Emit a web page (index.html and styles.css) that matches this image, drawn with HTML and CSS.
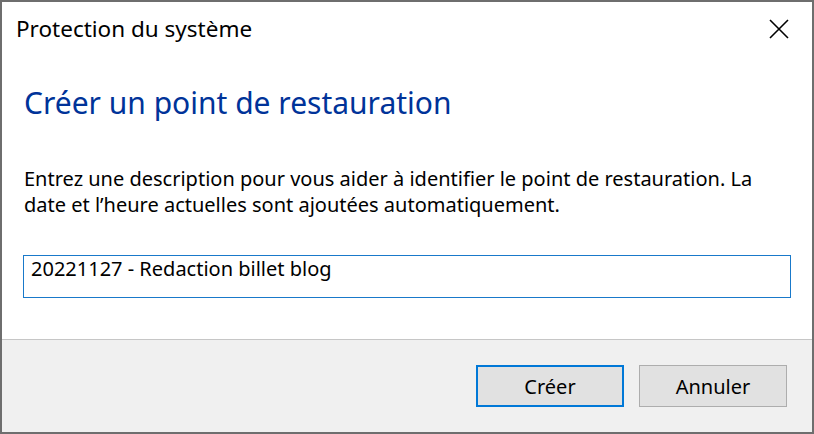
FILE: index.html
```html
<!DOCTYPE html>
<html lang="fr">
<head>
<meta charset="utf-8">
<title>Protection du système</title>
<link rel="stylesheet" href="styles.css">
</head>
<body>
<div class="window">
  <div class="titlebar">
    <span class="title">Protection du système</span>
    <button class="close" aria-label="Fermer">
      <svg width="20" height="20" viewBox="0 0 20 20"><path d="M1 1 L19 19 M19 1 L1 19" stroke="#000" stroke-width="1.6" fill="none"/></svg>
    </button>
  </div>
  <div class="content">
    <h1 class="heading">Créer un point de restauration</h1>
    <p class="desc">Entrez une description pour vous aider à identifier le point de restauration. La date et l’heure actuelles sont ajoutées automatiquement.</p>
    <div class="field">20221127 - Redaction billet blog</div>
  </div>
  <div class="footer">
    <button class="btn primary">Créer</button>
    <button class="btn">Annuler</button>
  </div>
</div>
</body>
</html>
```

FILE: styles.css
```css
html, body {
  margin: 0;
  padding: 0;
  background: #ffffff;
}
body {
  font-family: "Noto Sans", "Open Sans", sans-serif;
  color: #000;
}
.window {
  box-sizing: border-box;
  width: 814px;
  height: 434px;
  border: 2px solid #6e6e6e;
  display: flex;
  flex-direction: column;
  background: #fff;
}
.titlebar {
  height: 58px;
  display: flex;
  align-items: flex-start;
  justify-content: space-between;
  padding-left: 14px;
  box-sizing: border-box;
}
.title {
  font-size: 22.5px;
  line-height: 30px;
  margin-top: 12px;
}
.close {
  border: 0;
  background: transparent;
  padding: 0;
  margin: 17px 23px 0 0;
  width: 20px;
  height: 20px;
  display: flex;
}
.content {
  flex: 1;
  padding: 0 21px 0 21px;
}
.heading {
  margin: 23px 0 0 1px;
  font-weight: normal;
  font-size: 30px;
  line-height: 40px;
  color: #003399;
}
.desc {
  margin: 43px 0 0 1px;
  max-width: 762px;
  font-size: 20px;
  line-height: 26px;
}
.field {
  margin-top: 37px;
  box-sizing: border-box;
  height: 43px;
  border: 1px solid #1979ca;
  padding: 0 7px;
  font-size: 20px;
  line-height: 26px;
}
.footer {
  height: 93px;
  box-sizing: border-box;
  border-top: 1px solid #c6c6c6;
  background: #f0f0f0;
  display: flex;
  justify-content: flex-end;
  align-items: flex-start;
  gap: 15px;
  padding: 25px 25px 0 0;
}
.btn {
  box-sizing: border-box;
  width: 148px;
  height: 42px;
  background: #e1e1e1;
  border: 1px solid #adadad;
  font-family: inherit;
  font-size: 20px;
  color: #000;
  padding: 0;
}
.btn.primary {
  border: 2px solid #0078d7;
}
```
